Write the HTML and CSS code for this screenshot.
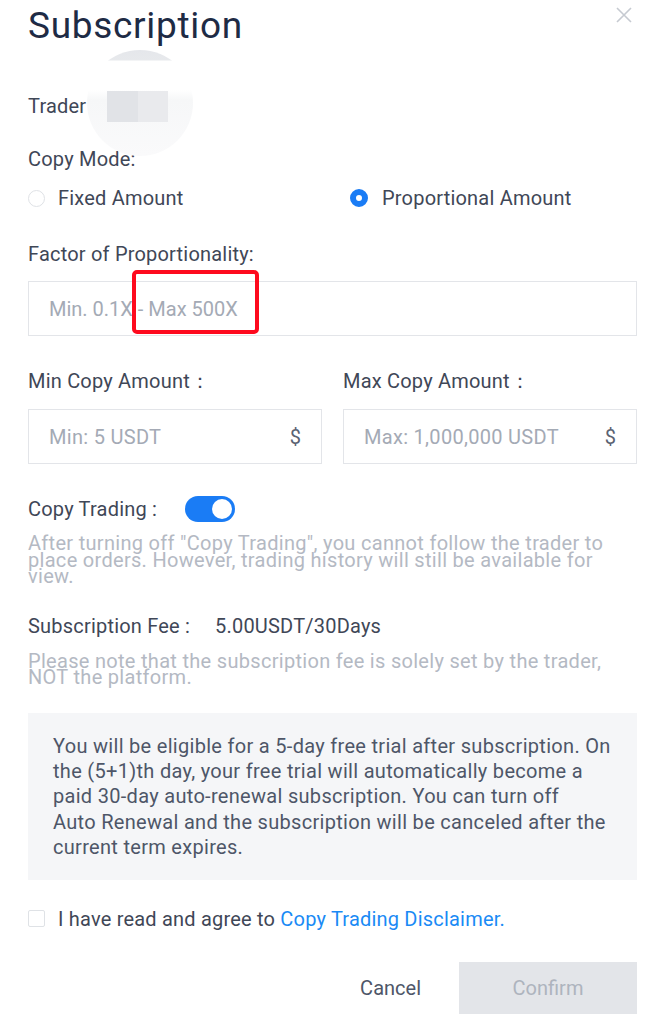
FILE: index.html
```html
<!DOCTYPE html>
<html>

<head>
  <title>Subscription</title>
  <link rel="stylesheet" href="styles.css">
</head>

<body>
  <div class="modal">
    <div class="modal-head">
      <h1 class="title">Subscription</h1>
      <svg class="close" width="16" height="16" viewBox="0 0 16 16">
        <path d="M1 1L15 15M15 1L1 15" stroke="#c6cad1" stroke-width="1.6" fill="none" />
      </svg>
    </div>

    <div class="trader-row">
      <span class="avatar"></span>
      <span class="label">Trader</span>
      <span class="trader-name"></span>
    </div>

    <div class="label mode-label">Copy Mode:</div>
    <div class="radio-row">
      <label class="radio"><span class="radio-dot"></span>Fixed Amount</label>
      <label class="radio active"><span class="radio-dot"></span>Proportional Amount</label>
    </div>

    <div class="label factor-label">Factor of Proportionality:</div>
    <div class="field field-wide">
      <span class="placeholder factor-placeholder">Min. 0.1X - Max 500X</span>
      <span class="highlight"></span>
    </div>

    <div class="amount-row">
      <div class="amount-col">
        <div class="label">Min Copy Amount：</div>
        <div class="field">
          <span class="placeholder">Min: 5 USDT</span>
          <span class="unit">$</span>
        </div>
      </div>
      <div class="amount-col">
        <div class="label">Max Copy Amount：</div>
        <div class="field">
          <span class="placeholder">Max: 1,000,000 USDT</span>
          <span class="unit">$</span>
        </div>
      </div>
    </div>

    <div class="switch-row">
      <span class="label">Copy Trading :</span>
      <span class="switch"><span class="knob"></span></span>
    </div>
    <p class="hint hint-trading">After turning off "Copy Trading", you cannot follow the trader to place orders. However, trading history will still be available for view.</p>

    <div class="fee-row">
      <span class="label">Subscription Fee :</span>
      <span class="fee-value">5.00USDT/30Days</span>
    </div>
    <p class="hint hint-fee">Please note that the subscription fee is solely set by the trader, NOT the platform.</p>

    <div class="notice">
      You will be eligible for a 5-day free trial after subscription. On<br>
      the (5+1)th day, your free trial will automatically become a<br>
      paid 30-day auto-renewal subscription. You can turn off<br>
      Auto Renewal and the subscription will be canceled after the<br>
      current term expires.
    </div>

    <label class="agree">
      <span class="checkbox"></span>
      I have read and agree to&nbsp;<a href="#">Copy Trading Disclaimer.</a>
    </label>

    <div class="actions">
      <button class="btn-cancel">Cancel</button>
      <button class="btn-confirm" disabled>Confirm</button>
    </div>
  </div>
</body>

</html>
```

FILE: styles.css
```css
/* Reset default margin and padding for body */
body {
  margin: 0;
  padding: 0;
  background-color: #fff;
  font-family: Roboto, 'Liberation Sans', sans-serif;
  color: #3f4757;
}

/* Modal wrapper */
.modal {
  padding: 0 10px 0 28px;
}

.modal-head {
  display: flex;
  justify-content: space-between;
  align-items: flex-start;
  height: 76px;
}

.title {
  margin: 4px 0 0 0;
  font-size: 37px;
  line-height: 44px;
  font-weight: 400;
  color: #1e2b45;
  letter-spacing: 0.7px;
}

.close {
  margin: 7px 5px 0 0;
}

/* Labels */
.label {
  font-size: 20px;
  line-height: 24px;
  color: #3f4757;
  letter-spacing: 0.2px;
}

/* Trader row with blurred name */
.trader-row {
  position: relative;
  display: flex;
  align-items: center;
  height: 60px;
}

/* faded avatar behind the trader name */
.avatar {
  position: absolute;
  left: 59px;
  top: -26px;
  width: 106px;
  height: 106px;
  border-radius: 50%;
  background: linear-gradient(#e5e7eb 0, #e7e9ec 10px, #fff 11px, #fff 40px, #f6f7f8 50px, #fafafb 100%);
}

.trader-row .label {
  position: relative;
}

.trader-name {
  position: relative;
  width: 61px;
  height: 31px;
  margin-left: 21px;
  background: linear-gradient(90deg, #e1e3e7 50%, #e9eaed 50%);
}

.mode-label {
  margin-top: 11px;
}

/* Radio buttons */
.radio-row {
  display: grid;
  grid-template-columns: 322px 1fr;
  margin-top: 15px;
}

.radio {
  display: flex;
  align-items: center;
  font-size: 20px;
  line-height: 24px;
  color: #3f4757;
  letter-spacing: 0.2px;
}

.radio-dot {
  width: 17px;
  height: 17px;
  border: 1px solid #dfe2e6;
  border-radius: 50%;
  margin-right: 13px;
  box-sizing: border-box;
}

.radio.active .radio-dot {
  border: 6px solid #1a7cf5;
  background-color: #fff;
  width: 18px;
  height: 18px;
  margin-right: 14px;
}

.factor-label {
  margin-top: 32px;
}

/* Inputs */
.field {
  position: relative;
  display: flex;
  align-items: center;
  justify-content: space-between;
  height: 55px;
  border: 1px solid #e3e5e9;
  padding: 0 20px;
  box-sizing: border-box;
}

.field-wide {
  margin-top: 15px;
}

.placeholder {
  font-size: 20px;
  color: #a4aab5;
  letter-spacing: 0.3px;
}

.factor-placeholder {
  letter-spacing: 0;
}

/* Red annotation box */
.highlight {
  position: absolute;
  left: 103px;
  top: -12px;
  width: 119px;
  height: 56px;
  border: 4px solid #fe0a1e;
  border-radius: 5px;
}

.amount-row {
  display: flex;
  gap: 21px;
  margin-top: 33px;
}

.amount-col {
  flex: 1;
}

.amount-col .field {
  margin-top: 16px;
}

.unit {
  font-size: 20px;
  color: #5a6272;
}

/* Switch */
.switch-row {
  display: flex;
  align-items: center;
  margin-top: 32px;
}

.switch {
  position: relative;
  width: 50px;
  height: 26px;
  border-radius: 13px;
  background-color: #1a7cf5;
  margin-left: 28px;
}

.knob {
  position: absolute;
  right: 3px;
  top: 3px;
  width: 20px;
  height: 20px;
  border-radius: 50%;
  background-color: #fff;
}

.hint {
  max-width: 592px;
  margin: 0;
  font-size: 20px;
  line-height: 16.5px;
  color: #b4b9c3;
  letter-spacing: 0.3px;
}

.hint-trading {
  margin-top: 13px;
}

.fee-row {
  display: flex;
  align-items: center;
  margin-top: 29px;
}

.fee-value {
  font-size: 20px;
  line-height: 24px;
  color: #3f4757;
  margin-left: 25px;
  letter-spacing: 0.2px;
}

.hint-fee {
  margin-top: 15px;
}

/* Notice box */
.notice {
  margin-top: 27px;
  background-color: #f5f6f8;
  padding: 21px 20px 19px 25px;
  font-size: 20px;
  line-height: 25.4px;
  color: #4e5668;
  letter-spacing: 0.3px;
}

/* Agreement */
.agree {
  display: flex;
  align-items: center;
  margin-top: 27px;
  font-size: 20px;
  line-height: 24px;
  color: #3f4757;
  letter-spacing: 0.2px;
}

.checkbox {
  width: 17px;
  height: 17px;
  border: 1px solid #dfe2e6;
  border-radius: 2px;
  margin-right: 13px;
  box-sizing: border-box;
}

.agree a {
  color: #1a8af5;
  text-decoration: none;
}

/* Buttons */
.actions {
  display: flex;
  justify-content: flex-end;
  align-items: center;
  margin-top: 31px;
}

.btn-cancel {
  background: none;
  border: none;
  font-family: inherit;
  font-size: 20px;
  color: #4e5668;
  padding: 0;
  margin-right: 38px;
}

.btn-confirm {
  width: 178px;
  height: 52px;
  border: none;
  background-color: #e3e5e9;
  font-family: inherit;
  font-size: 20px;
  color: #aeb4be;
}
```
